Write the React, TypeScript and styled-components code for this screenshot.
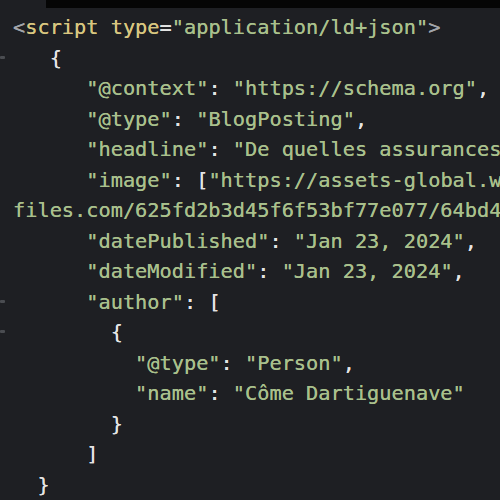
import React from 'react';
import styled, { createGlobalStyle } from 'styled-components';

const GlobalStyle = createGlobalStyle`
  html, body {
    margin: 0;
    padding: 0;
    background: #1e1f23;
  }
`

type Kind = 'p' | 's' | 'a' | 't'
type Tok = [string, Kind]

const lines: { fold?: boolean; toks: Tok[] }[] = [
  { toks: [['<', 't'], ['script', 'a'], [' ', 'p'], ['type', 'a'], ['=', 'p'], ['"application/ld+json"', 's'], ['>', 't']] },
  { fold: true, toks: [['   {', 'p']] },
  { toks: [['      ', 'p'], ['"@context"', 's'], [': ', 'p'], ['"https://schema.org"', 's'], [',', 'p']] },
  { toks: [['      ', 'p'], ['"@type"', 's'], [': ', 'p'], ['"BlogPosting"', 's'], [',', 'p']] },
  { toks: [['      ', 'p'], ['"headline"', 's'], [': ', 'p'], ['"De quelles assurances', 's']] },
  { toks: [['      ', 'p'], ['"image"', 's'], [': ', 'p'], ['[', 'p'], ['"https://assets-global.w', 's']] },
  { toks: [['files.com/625fd2b3d45f6f53bf77e077/64bd4', 's']] },
  { toks: [['      ', 'p'], ['"datePublished"', 's'], [': ', 'p'], ['"Jan 23, 2024"', 's'], [',', 'p']] },
  { toks: [['      ', 'p'], ['"dateModified"', 's'], [': ', 'p'], ['"Jan 23, 2024"', 's'], [',', 'p']] },
  { fold: true, toks: [['      ', 'p'], ['"author"', 's'], [': ', 'p'], ['[', 'p']] },
  { fold: true, toks: [['        {', 'p']] },
  { toks: [['          ', 'p'], ['"@type"', 's'], [': ', 'p'], ['"Person"', 's'], [',', 'p']] },
  { toks: [['          ', 'p'], ['"name"', 's'], [': ', 'p'], ['"Côme Dartiguenave"', 's']] },
  { toks: [['        }', 'p']] },
  { toks: [['      ]', 'p']] },
  { toks: [['  }', 'p']] },
]

export default function App() {
  return (
    <>
      <GlobalStyle />
      <Screen>
        <TopBar />
        <Code>
          {lines.map((l, i) => (
            <Line key={i} $fold={l.fold}>
              {l.toks.map(([text, kind], j) => (
                <Token key={j} $kind={kind}>{text}</Token>
              ))}
            </Line>
          ))}
        </Code>
      </Screen>
    </>
  )
}

const Screen = styled.div`
  width: 500px;
  height: 500px;
  overflow: hidden;
  background: #1e1f23;
  display: flex;
  flex-direction: column;
`

const TopBar = styled.div`
  height: 8px;
  margin-left: 46px;
  background: #050505;
  flex-shrink: 0;
`

const Code = styled.div`
  padding: 4px 0 0 13px;
  font-family: "DejaVu Sans Mono", "Liberation Mono", monospace;
  font-size: 20.3px;
  line-height: 30.5px;
`

const Line = styled.div<{ $fold?: boolean }>`
  position: relative;
  white-space: pre;
  height: 30.5px;
  &::before {
    content: '';
    display: ${p => (p.$fold ? 'block' : 'none')};
    position: absolute;
    left: -13px;
    top: 13px;
    width: 5px;
    height: 3px;
    background: #4a4c51;
    border-radius: 1px;
  }
`

const colors: Record<Kind, string> = {
  p: '#e4e4e4',
  s: '#a9c08c',
  a: '#d8c67f',
  t: '#a2a5aa',
}

const Token = styled.span<{ $kind: Kind }>`
  color: ${p => colors[p.$kind]};
  text-shadow: 0 0 0.6px ${p => colors[p.$kind]};
`
